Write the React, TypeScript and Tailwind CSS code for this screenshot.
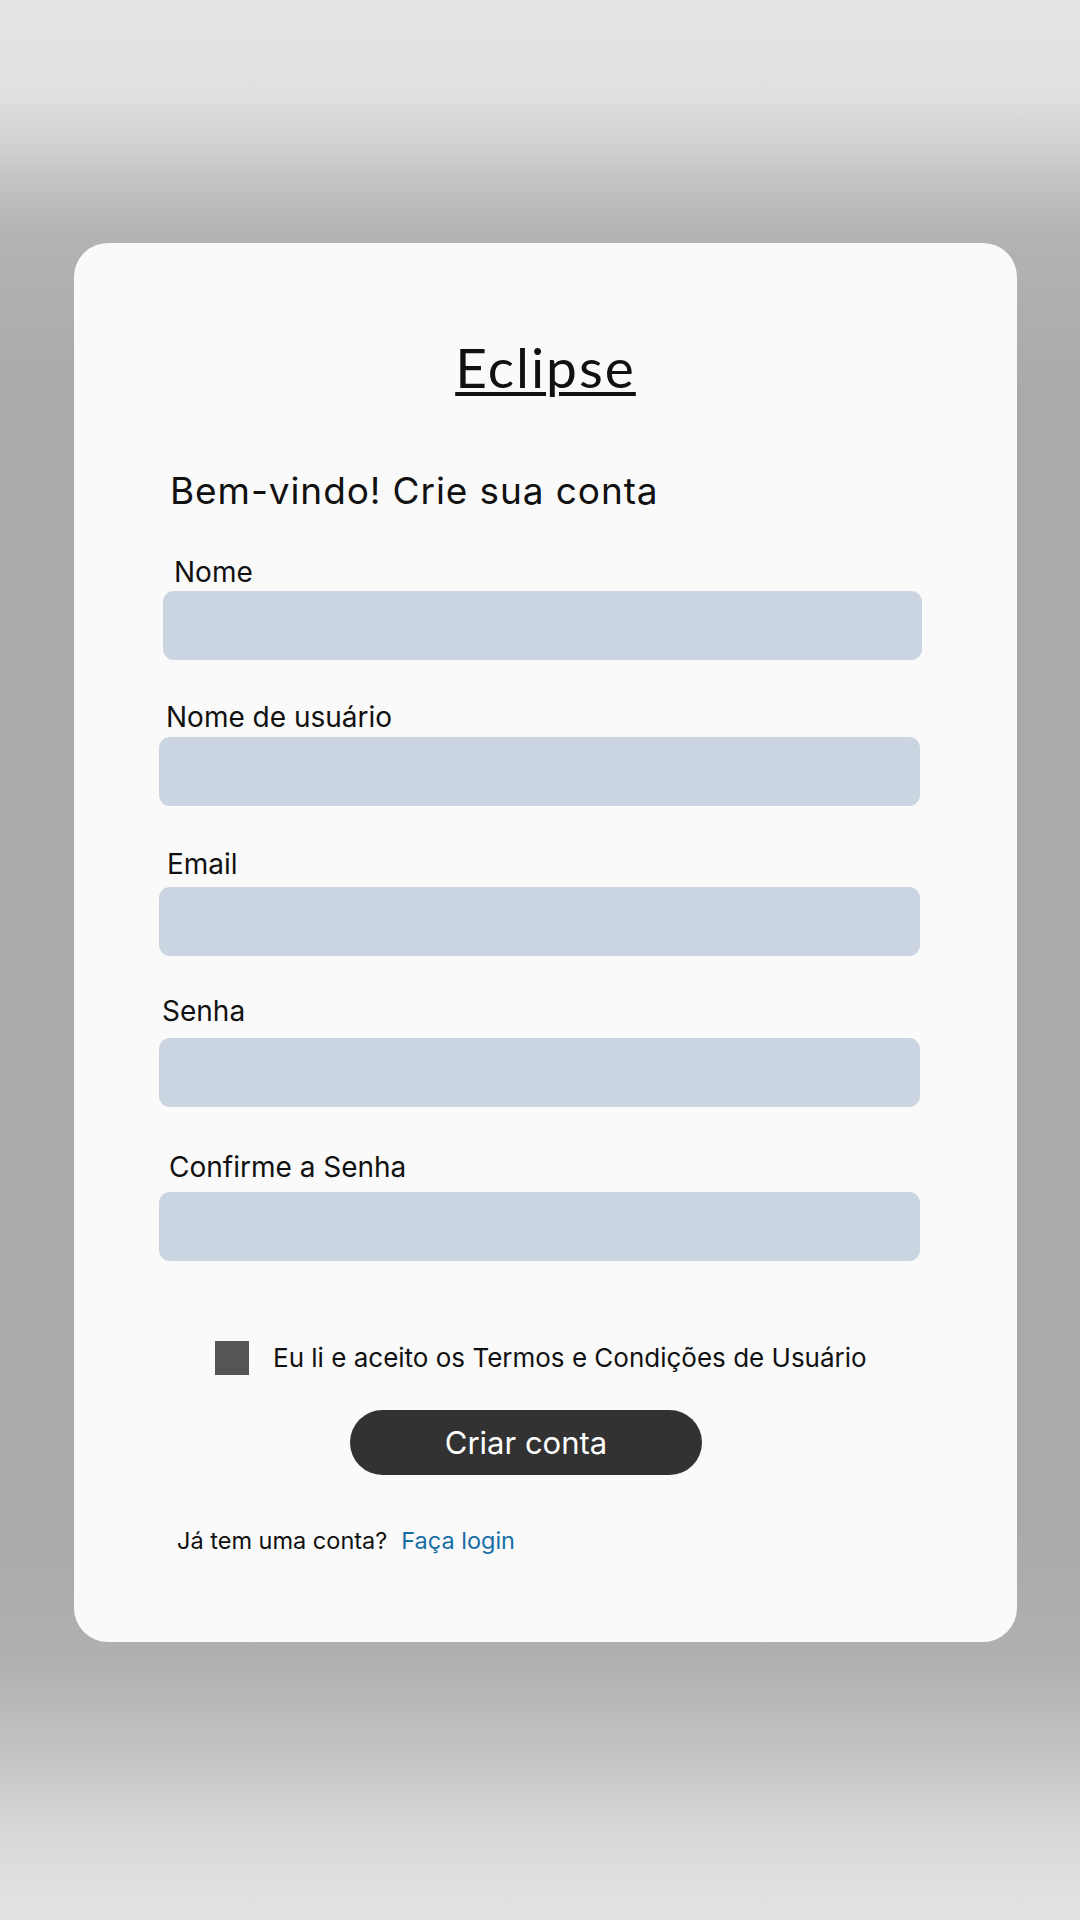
import React, { useState } from 'react';

interface FieldProps {
  label: string;
  type?: string;
  labelClass: string;
  inputClass: string;
}

const Field: React.FC<FieldProps> = ({ label, type = 'text', labelClass, inputClass }) => {
  const [value, setValue] = useState('');
  return (
    <>
      <label className={`block text-[28px] leading-none text-[#111] ${labelClass}`}>{label}</label>
      <input
        type={type}
        value={value}
        onChange={(e) => setValue(e.target.value)}
        className={`block h-[69px] rounded-[11px] bg-[#cbd5e1] px-4 text-[24px] text-[#111] outline-none ${inputClass}`}
      />
    </>
  );
};

export default function App() {
  const [accepted, setAccepted] = useState(false);

  return (
    <div
      className="flex h-[1920px] w-full flex-col bg-[linear-gradient(180deg,#e5e5e5_0%,#e0e0e0_5%,#cfcfcf_7.8%,#bdbdbd_10.4%,#b3b3b3_12.5%,#aaaaaa_20%,#aaaaaa_80%,#b0b0b0_86.5%,#c6c6c6_92%,#d9d9d9_95.5%,#e3e3e3_100%)] pt-[243px]"
      style={{ fontFamily: 'Inter, "Noto Sans", sans-serif' }}
    >
      <div className="ml-[74px] flex h-[1399px] w-[943px] flex-col rounded-[34px] bg-[#fafafa] pt-[97px]">
        {/* Logo */}
        <h1
          className="text-center text-[55px] leading-none tracking-[2px] text-[#111] underline decoration-[4px] underline-offset-[4px]"
          style={{ fontFamily: 'Lato, sans-serif' }}
        >
          Eclipse
        </h1>

        <h2 className="ml-[96px] mt-[77px] text-[37px] leading-none tracking-[0.9px] text-[#111]">
          Bem-vindo! Crie sua conta
        </h2>

        <Field label="Nome" labelClass="ml-[100px] mt-[49px]" inputClass="ml-[89px] mt-[5px] w-[759px]" />
        <Field label="Nome de usuário" labelClass="ml-[92px] mt-[43px]" inputClass="ml-[85px] mt-[6px] w-[761px]" />
        <Field label="Email" type="email" labelClass="ml-[93px] mt-[44px]" inputClass="ml-[85px] mt-[9px] w-[761px]" />
        <Field label="Senha" type="password" labelClass="ml-[88px] mt-[41px]" inputClass="ml-[85px] mt-[13px] w-[761px]" />
        <Field
          label="Confirme a Senha"
          type="password"
          labelClass="ml-[95px] mt-[46px]"
          inputClass="ml-[85px] mt-[11px] w-[761px]"
        />

        {/* Termos */}
        <div className="ml-[141px] mt-[80px] flex h-[34px] items-center">
          <button
            type="button"
            onClick={() => setAccepted(!accepted)}
            className="flex h-[34px] w-[34px] items-center justify-center bg-[#555555] text-[22px] text-white"
          >
            {accepted ? '✓' : ''}
          </button>
          <span className="ml-[24px] text-[26px] leading-none text-[#111]">
            Eu li e aceito os Termos e Condições de Usuário
          </span>
        </div>

        <button
          type="button"
          className="ml-[276px] mt-[35px] flex h-[65px] w-[352px] items-center justify-center rounded-full bg-[#323232] text-[31px] leading-none text-white"
        >
          Criar conta
        </button>

        <p className="ml-[103px] mt-[54px] text-[23.5px] leading-none text-[#111]">
          Já tem uma conta?
          <a href="#" className="ml-[14px] text-[#176ea6]">
            Faça login
          </a>
        </p>
      </div>
    </div>
  );
}
